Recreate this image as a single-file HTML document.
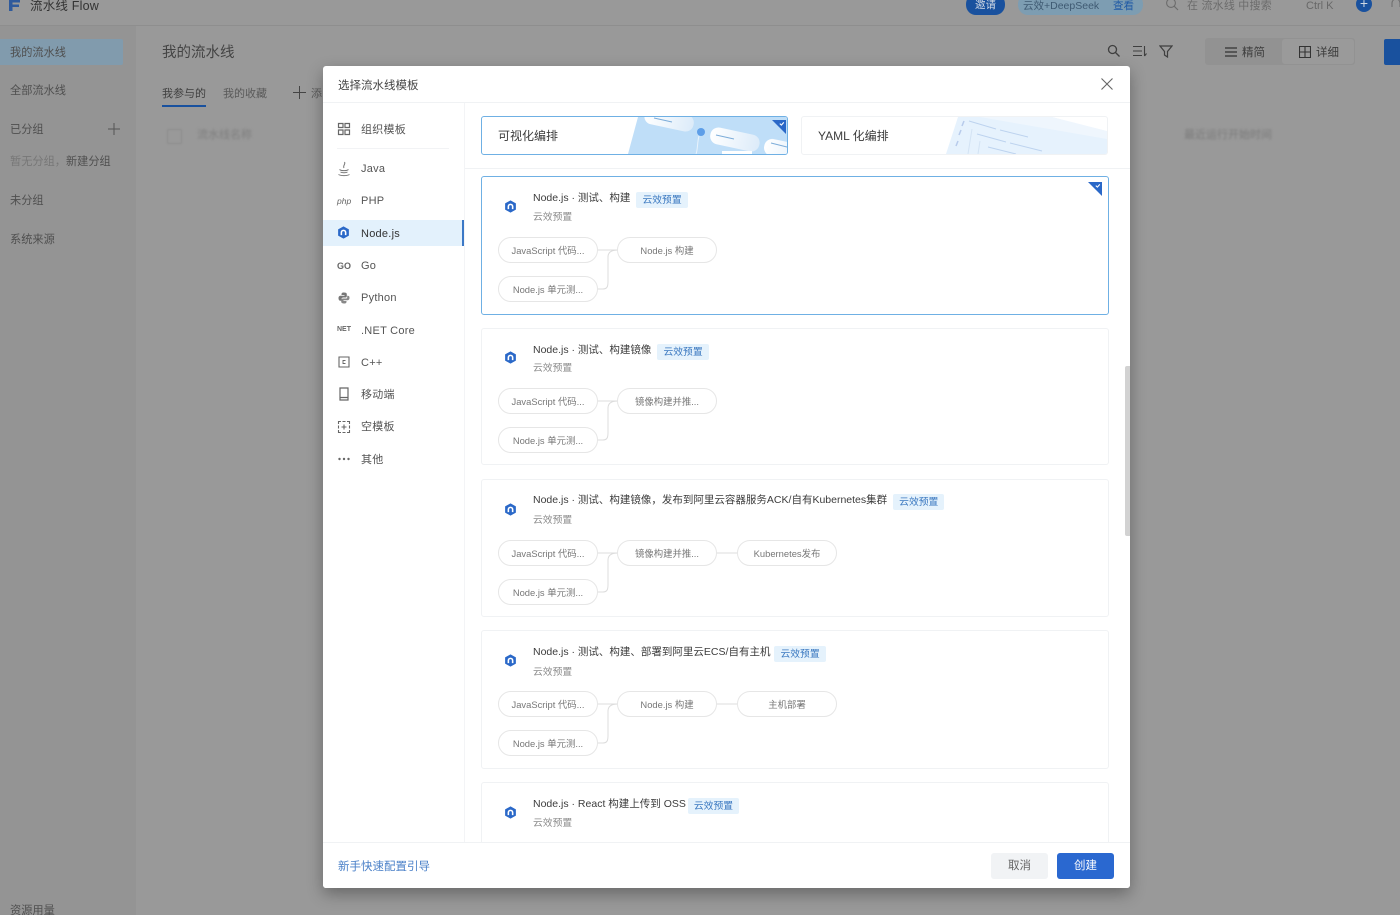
<!DOCTYPE html>
<html lang="zh-CN"><head><meta charset="utf-8"><title>选择流水线模板</title>
<style>
*{box-sizing:border-box;margin:0;padding:0}
html{background:#999}
html,body{width:1400px;height:915px;overflow:hidden;font-family:"Liberation Sans","Noto Sans CJK SC",sans-serif;font-size:12px;color:#333}
body{filter:blur(.3px);background:#999}
.a{position:absolute;white-space:nowrap}
.bg{color:#4f4f4f}
.t{line-height:16px}
#modal{position:absolute;left:323px;top:66px;width:807px;height:822px;background:#fff;border-radius:3px;box-shadow:0 6px 16px rgba(0,0,0,.32);overflow:hidden}
.nav{position:absolute;left:38px;color:#555;line-height:16px;font-size:11px;letter-spacing:.25px}
.ic{position:absolute;left:13px;width:16px;height:16px}
.card{position:absolute;left:158px;width:628px;background:#fff;border:1px solid #f0f2f4;border-radius:3px}
.sel{border-color:#6fb0e4}
.title{position:absolute;left:51px;top:13px;line-height:16px;color:#3c3c3c;white-space:nowrap;font-size:10.5px}
.tag{display:inline-block;background:#e5f2fc;color:#3a78c0;border-radius:2px;height:16px;line-height:17px;padding:0 6px;margin-left:6px;font-size:9.8px;vertical-align:-2px}
.sub{position:absolute;left:51px;top:33px;color:#8b8b8b;line-height:16px;font-size:9.8px}
.logo{position:absolute;left:22px;top:23px}
.pill{position:absolute;width:100px;height:26px;border:1px solid #e6e6e6;border-radius:13px;background:#fff;color:#777;text-align:center;line-height:25px;font-size:9.4px;white-space:nowrap}
.p1{left:16px}.p2{left:135px}.p3{left:255px}
svg.c{position:absolute;left:116px;width:140px;height:60px;fill:none;stroke:#dcdcdc;stroke-width:1}
</style></head><body>
<svg width="0" height="0" style="position:absolute"><defs>
<symbol id="n" viewBox="0 0 14 14"><path d="M7 .4 12.800 3.700V10.300L7 13.600 1.200 10.300V3.700Z" fill="#2a68c8"/><path d="M4.700 9.800V7A2.300 2.300 0 0 1 9.300 7V9.800" fill="none" stroke="#fff" stroke-width="1.700"/></symbol>
<symbol id="ck" viewBox="0 0 14 14"><path d="M0 0H14V14Z" fill="#2a68c8"/><path d="M7.800 3.600 9.400 5.100 11.800 2.400" fill="none" stroke="#fff" stroke-width="1.100"/></symbol>
</defs></svg>

<!-- background -->
<div class="a" style="left:0;top:0;width:1400px;height:26px;background:#999;border-bottom:1px solid #8e8e8e"></div>
<div class="a" style="left:0;top:26px;width:136px;height:889px;background:#949494"></div>
<svg class="a" style="left:8px;top:0" width="14" height="12"><path d="M1 0V11H4.500V7H11V4.500H4.500V2.500H12V0Z" fill="#2f5a9c"/></svg>
<div class="a t" style="left:30px;top:-2px;font-size:12.500px;color:#333;letter-spacing:.2px">流水线 Flow</div>
<div class="a" style="left:966px;top:-6px;width:39px;height:21px;border-radius:10px;background:#19519e;color:#cfd8e4;text-align:center;line-height:23px;font-size:10.500px">邀请</div>
<div class="a" style="left:1018px;top:-6px;width:125px;height:21px;border-radius:10px;background:#7d9db2"></div>
<div class="a t" style="left:1023px;top:-2px;font-size:10.500px;color:#3f5a72">云效+DeepSeek</div>
<div class="a t" style="left:1113px;top:-2px;font-size:10.500px;color:#1f5aa5">查看</div>
<svg class="a" style="left:1165px;top:-3px" width="14" height="14" fill="none" stroke="#6c6c6c" stroke-width="1.100"><circle cx="6" cy="6" r="4.400"/><path d="M9.300 9.300 13 13"/></svg>
<div class="a t" style="left:1187px;top:-2px;font-size:11px;color:#6c6c6c;letter-spacing:.2px">在 流水线 中搜索</div>
<div class="a t" style="left:1306px;top:-2px;font-size:11px;color:#686868">Ctrl K</div>
<div class="a" style="left:1356px;top:-4px;width:16px;height:16px;border-radius:8px;background:#19519e;color:#cfd8e4;text-align:center;line-height:15px;font-size:14px">+</div>
<svg class="a" style="left:1391px;top:-2px" width="9" height="14" fill="none" stroke="#6c6c6c"><path d="M1 9V5a4 4 0 0 1 8 0v4"/></svg>

<div class="a" style="left:0;top:39px;width:123px;height:26px;background:#819bad;border-radius:0 2px 2px 0"></div>
<div class="a t bg" style="left:10px;top:45px;font-size:11.200px">我的流水线</div>
<div class="a t bg" style="left:10px;top:83px;font-size:11.200px">全部流水线</div>
<div class="a t bg" style="left:10px;top:122px;font-size:11.200px">已分组</div>
<svg class="a" style="left:107px;top:122px" width="14" height="14" stroke="#555" stroke-width="1"><path d="M7 1V13M1 7H13"/></svg>
<div class="a t" style="left:10px;top:154px;font-size:11.200px;color:#777">暂无分组，<span style="color:#4f4f4f">新建分组</span></div>
<div class="a t bg" style="left:10px;top:193px;font-size:11.200px">未分组</div>
<div class="a t bg" style="left:10px;top:232px;font-size:11.200px">系统来源</div>
<div class="a t bg" style="left:10px;top:903px;font-size:11.200px">资源用量</div>

<div class="a" style="left:162px;top:42px;font-size:14.500px;line-height:22px;color:#444">我的流水线</div>
<div class="a t" style="left:162px;top:86px;font-size:11px;color:#3f3f3f">我参与的</div>
<div class="a" style="left:162px;top:105px;width:44px;height:2px;background:#19519e"></div>
<div class="a t" style="left:223px;top:86px;font-size:11px;color:#5a5a5a">我的收藏</div>
<svg class="a" style="left:293px;top:86px" width="13" height="13" stroke="#444"><path d="M6.500 0V13M0 6.500H13"/></svg>
<div class="a t" style="left:311px;top:86px;font-size:11px;color:#5a5a5a">添</div>
<div class="a" style="left:167px;top:129px;width:15px;height:15px;border:1px solid #8c8c8c;border-radius:2px;filter:blur(.8px)"></div>
<div class="a t" style="left:197px;top:127px;font-size:11px;color:#7e7e7e;filter:blur(1px)">流水线名称</div>
<div class="a t" style="left:1184px;top:127px;font-size:11px;color:#7a7a7a;filter:blur(1px)">最近运行开始时间</div>

<svg class="a" style="left:1107px;top:44px" width="14" height="14" fill="none" stroke="#3f3f3f" stroke-width="1.300"><circle cx="5.500" cy="5.500" r="4"/><path d="M8.500 8.500 12.500 12.500"/></svg>
<svg class="a" style="left:1133px;top:45px" width="14" height="13" fill="none" stroke="#3f3f3f" stroke-width="1.100"><path d="M0 1.500H9M0 6H9M0 10.500H9M11.500 1V11M11.500 11 13.500 8.500"/></svg>
<svg class="a" style="left:1159px;top:45px" width="14" height="13" fill="none" stroke="#3f3f3f" stroke-width="1.200"><path d="M1 1H13L8.500 6.500V12L5.500 10V6.500Z"/></svg>
<div class="a" style="left:1205px;top:38px;width:150px;height:27px;background:#929292;border-radius:3px"></div>
<div class="a" style="left:1282px;top:39px;width:72px;height:25px;background:#9a9a9a;border-radius:3px"></div>
<svg class="a" style="left:1225px;top:46px" width="12" height="12" stroke="#333" stroke-width="1.200"><path d="M0 2H12M0 6H12M0 10H12"/></svg>
<div class="a t" style="left:1242px;top:45px;font-size:11.500px;color:#3c3c3c">精简</div>
<svg class="a" style="left:1299px;top:46px" width="12" height="12" fill="none" stroke="#333" stroke-width="1.100"><path d="M.5.5H11.500V11.500H.5ZM6 .5V11.500M.5 6H11.500"/></svg>
<div class="a t" style="left:1316px;top:45px;font-size:11.500px;color:#3c3c3c">详细</div>
<div class="a" style="left:1384px;top:39px;width:16px;height:26px;background:#19519e;border-radius:2px 0 0 2px"></div>

<!-- modal -->
<div id="modal">
  <div class="a t" style="left:15px;top:12px;color:#444;font-size:11.500px">选择流水线模板</div>
  <svg class="a" style="left:778px;top:12px" width="12" height="12" stroke="#666" stroke-width="1.100"><path d="M.5.5 11.500 11.500M11.500.5 .5 11.500"/></svg>
  <div class="a" style="left:0;top:36px;width:807px;height:1px;background:#f0f2f4"></div>
  <div class="a" style="left:141px;top:37px;width:1px;height:740px;background:#f3f4f6"></div>

  <!-- nav -->
  <svg class="ic" style="top:55px" viewBox="0 0 16 16" fill="none" stroke="#666" stroke-width="1.200"><path d="M2.500 2.500H7V6.500H2.500ZM9 2.500H13.500V6.500H9ZM2.500 9H7V13.500H2.500ZM9 9H13.500V13.500H9Z"/></svg>
  <div class="nav" style="top:56px">组织模板</div>
  <div class="a" style="left:14px;top:82px;width:112px;height:1px;background:#f2f3f5"></div>
  <svg class="ic" style="top:95px" viewBox="0 0 16 16" fill="none" stroke="#777" stroke-width="1"><path d="M8.500 1C10 3 6.500 4.500 8 7M3.500 8.500C5 10 11 10 12.500 8.500M4.500 11C6 12 10 12 11.500 11M2.500 13.500C5 15 11 15 13.500 13.500"/></svg>
  <div class="nav" style="top:95px">Java</div>
  <div class="a" style="left:14px;top:127px;width:16px;font-size:8.500px;line-height:16px;color:#666;font-style:italic">php</div>
  <div class="nav" style="top:127px">PHP</div>

  <div class="a" style="left:0;top:154px;width:141px;height:26px;background:#e3f1fc;border-right:2px solid #3b78c6"></div>
  <svg class="ic" style="top:160px;left:14px;width:13px;height:13px"><use href="#n"/></svg>
  <div class="nav" style="top:160px;color:#333">Node.js</div>
  <div class="a" style="left:14px;top:192px;font-size:9px;font-weight:700;line-height:16px;color:#666">GO</div>
  <div class="nav" style="top:192px">Go</div>
  <svg class="ic" style="top:224px" viewBox="0 0 16 16"><path d="M8 2.500C5.500 2.500 5.500 3.500 5.500 5H8.500V5.800H4.500C3 5.800 2.500 7 2.500 8.300 2.500 9.800 3.200 10.800 4.500 10.800H5.500V9.200C5.500 8 6.300 7.500 7.300 7.500H9.500C10.300 7.500 10.800 7 10.800 6.200V4.200C10.800 3 9.800 2.500 8 2.500Z" fill="#777"/><path d="M8 13.500C10.500 13.500 10.500 12.500 10.500 11H7.500V10.200H11.500C13 10.200 13.500 9 13.500 7.700 13.500 6.200 12.800 5.800 11.500 5.800H11.200V7.500C11.200 8.500 10.500 8.500 9.500 8.500H7C6 8.500 5.200 9 5.200 9.800V11.800C5.200 13 6.200 13.500 8 13.500Z" fill="#888"/></svg>
  <div class="nav" style="top:224px">Python</div>
  <div class="a" style="left:14px;top:256px;font-size:7px;font-weight:700;line-height:16px;color:#666">NET</div>
  <div class="nav" style="top:257px">.NET Core</div>
  <svg class="ic" style="top:288px" viewBox="0 0 16 16" fill="none" stroke="#666" stroke-width="1.100"><path d="M3 3H13V13H3Z"/><path d="M9.500 6.500H7V9.500H9.500" stroke-width=".9"/></svg>
  <div class="nav" style="top:289px">C++</div>
  <svg class="ic" style="top:320px" viewBox="0 0 16 16" fill="none" stroke="#666" stroke-width="1.200"><path d="M4 2H12V14H4ZM4 11.500H12"/></svg>
  <div class="nav" style="top:321px">移动端</div>
  <svg class="ic" style="top:353px" viewBox="0 0 16 16" fill="none" stroke="#666" stroke-width="1.100"><path d="M5 2.500H2.500V5M11 2.500H13.500V5M5 13.500H2.500V11M11 13.500H13.500V11M6.500 2.500H9.500M6.500 13.500H9.500M2.500 6.500V9.500M13.500 6.500V9.500M8 5.500V10.500M5.500 8H10.500"/></svg>
  <div class="nav" style="top:353px">空模板</div>
  <svg class="ic" style="top:385px" viewBox="0 0 16 16" fill="#666"><circle cx="3.500" cy="8" r="1.200"/><circle cx="8" cy="8" r="1.200"/><circle cx="12.500" cy="8" r="1.200"/></svg>
  <div class="nav" style="top:386px">其他</div>

  <!-- mode tabs -->
  <div class="a" style="left:158px;top:50px;width:307px;height:39px;border:1px solid #6fb0e4;border-radius:3px;overflow:hidden;background:#fff">
    <svg class="a" style="left:0;top:0" width="305" height="37">
      <defs><linearGradient id="g1" x1="0" x2="1"><stop offset="0" stop-color="#fff"/><stop offset="1" stop-color="#dcebf9"/></linearGradient></defs>
      <path d="M156 0H305V37H146Z" fill="#bfdef8"/>
      <rect x="162" y="-6" width="50" height="17" rx="8" fill="url(#g1)" transform="rotate(12 187 3)"/>
      <rect x="228" y="14" width="50" height="17" rx="8" fill="url(#g1)" transform="rotate(12 253 22)"/>
      <rect x="282" y="24" width="50" height="17" rx="8" fill="url(#g1)" transform="rotate(12 300 32)"/>
      <path d="M172 1 190 5M234 18 252 22M289 26 305 30" stroke="#7cacd9" stroke-width="1" fill="none"/>
      <circle cx="219" cy="15" r="4" fill="#5d9ee8"/>
      <path d="M217 19C215 26 216 32 214 37" stroke="#e8f3fc" fill="none"/>
      <path d="M240 37H270V34H240Z" fill="#fff"/>
    </svg>
    <div class="a" style="left:16px;top:11px;font-size:12px;line-height:16px;color:#3c3c3c">可视化编排</div>
    <svg class="a" style="left:290px;top:3px" width="14" height="14"><use href="#ck"/></svg>
  </div>
  <div class="a" style="left:478px;top:50px;width:307px;height:39px;border:1px solid #f0f2f4;border-radius:3px;overflow:hidden;background:#fff">
    <svg class="a" style="left:0;top:0" width="305" height="37">
      <path d="M156 0H250L305 15V37H144Z" fill="#e6f2fd"/>
      <path d="M178 0 305 22V14L250 0Z" fill="#eff6fd"/>
      <path d="M162 4 160 9M159 13 157 18M156 24 154 29" stroke="#b7cbeb" stroke-width="1.500"/>
      <path d="M167 4 194 12M198 13 226 20M175 17 204 25M208 26 240 34M186 30 214 37" stroke="#bdd3ef" fill="none"/>
      <path d="M170 12 166 37M178 24 176 37" stroke="#d3e3f4" fill="none"/>
    </svg>
    <div class="a" style="left:16px;top:11px;font-size:12px;line-height:16px;color:#3c3c3c">YAML 化编排</div>
  </div>
  <div class="a" style="left:142px;top:102px;width:665px;height:1px;background:#f0f2f4"></div>

  <!-- card 1 -->
  <div class="card sel" style="top:110px;height:139px">
    <svg class="logo" width="13" height="13"><use href="#n"/></svg>
    <div class="title">Node.js · 测试、构建<span class="tag">云效预置</span></div>
    <div class="sub">云效预置</div>
    <svg class="a" style="left:606px;top:5px" width="14" height="14"><use href="#ck"/></svg>
    <svg class="c" style="top:60px"><path d="M0 13H20M0 52H5C10 52 10 48 10 44V20C10 15 14 13 20 13"/></svg>
    <div class="pill p1" style="top:60px">JavaScript 代码...</div>
    <div class="pill p1" style="top:99px">Node.js 单元测...</div>
    <div class="pill p2" style="top:60px">Node.js 构建</div>
  </div>

  <!-- card 2 -->
  <div class="card" style="top:262px;height:137px">
    <svg class="logo" style="top:22px" width="13" height="13"><use href="#n"/></svg>
    <div class="title">Node.js · 测试、构建镜像<span class="tag">云效预置</span></div>
    <div class="sub" style="top:32px">云效预置</div>
    <svg class="c" style="top:59px"><path d="M0 13H20M0 52H5C10 52 10 48 10 44V20C10 15 14 13 20 13"/></svg>
    <div class="pill p1" style="top:59px">JavaScript 代码...</div>
    <div class="pill p1" style="top:98px">Node.js 单元测...</div>
    <div class="pill p2" style="top:59px">镜像构建并推...</div>
  </div>

  <!-- card 3 -->
  <div class="card" style="top:413px;height:138px">
    <svg class="logo" width="13" height="13"><use href="#n"/></svg>
    <div class="title" style="top:12px">Node.js · 测试、构建镜像，发布到阿里云容器服务ACK/自有Kubernetes集群<span class="tag">云效预置</span></div>
    <div class="sub">云效预置</div>
    <svg class="c" style="top:60px"><path d="M0 13H20M0 52H5C10 52 10 48 10 44V20C10 15 14 13 20 13M119 13H139"/></svg>
    <div class="pill p1" style="top:60px">JavaScript 代码...</div>
    <div class="pill p1" style="top:99px">Node.js 单元测...</div>
    <div class="pill p2" style="top:60px">镜像构建并推...</div>
    <div class="pill p3" style="top:60px">Kubernetes发布</div>
  </div>

  <!-- card 4 -->
  <div class="card" style="top:564px;height:139px">
    <svg class="logo" width="13" height="13"><use href="#n"/></svg>
    <div class="title">Node.js · 测试、构建、部署到阿里云ECS/自有主机<span class="tag" style="margin-left:4px">云效预置</span></div>
    <div class="sub" style="top:34px">云效预置</div>
    <svg class="c" style="top:60px"><path d="M0 13H20M0 52H5C10 52 10 48 10 44V20C10 15 14 13 20 13M119 13H139"/></svg>
    <div class="pill p1" style="top:60px">JavaScript 代码...</div>
    <div class="pill p1" style="top:99px">Node.js 单元测...</div>
    <div class="pill p2" style="top:60px">Node.js 构建</div>
    <div class="pill p3" style="top:60px">主机部署</div>
  </div>

  <!-- card 5 -->
  <div class="card" style="top:716px;height:100px">
    <svg class="logo" width="13" height="13"><use href="#n"/></svg>
    <div class="title">Node.js · React 构建上传到 OSS<span class="tag" style="margin-left:2px">云效预置</span></div>
    <div class="sub">云效预置</div>
  </div>

  <!-- scrollbar -->
  <div class="a" style="left:802px;top:300px;width:5px;height:170px;background:#d2d2d2;border-radius:2px 0 0 2px"></div>

  <!-- footer -->
  <div class="a" style="left:0;top:776px;width:807px;height:46px;background:#fff;border-top:1px solid #f0f2f4"></div>
  <div class="a t" style="left:15px;top:793px;font-size:11.500px;color:#4a80c8">新手快速配置引导</div>
  <div class="a" style="left:668px;top:787px;width:57px;height:26px;background:#f1f3f5;border-radius:3px;text-align:center;line-height:27px;color:#666;font-size:11.500px">取消</div>
  <div class="a" style="left:734px;top:787px;width:57px;height:26px;background:#2a68d0;border-radius:3px;text-align:center;line-height:27px;color:#fff;font-size:11.500px">创建</div>
</div>
</body></html>
